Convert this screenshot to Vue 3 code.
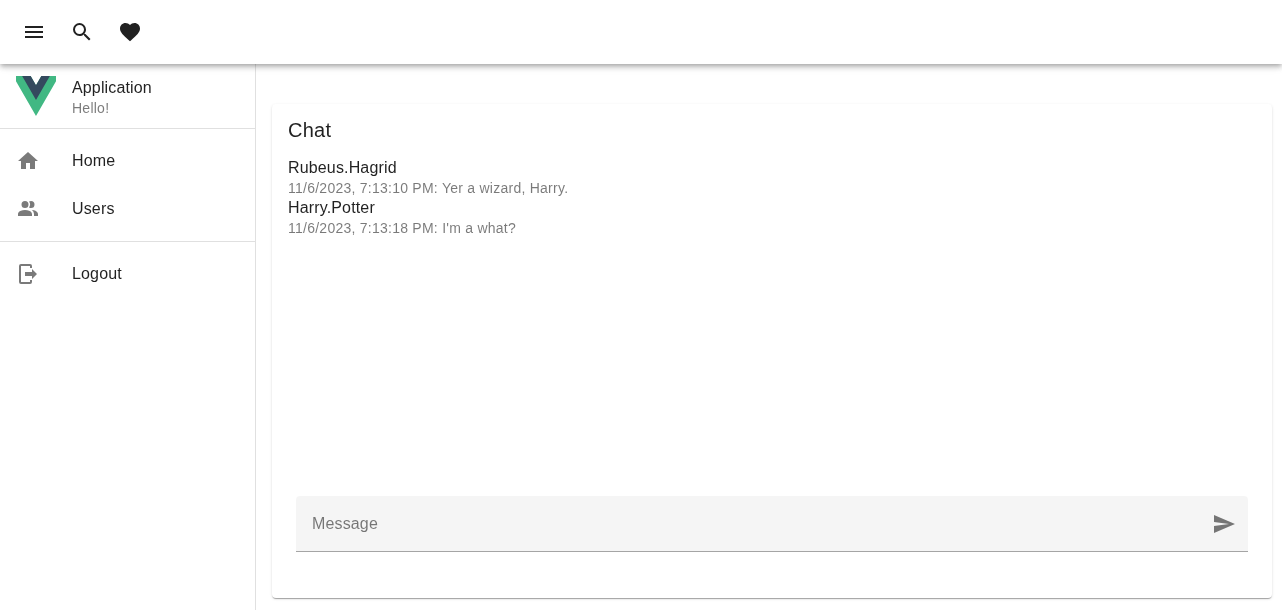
<script setup>
import { ref } from 'vue'

const mensagem = ref('')

const toolbar = [
  { id: 'menu', d: 'M3,6H21V8H3V6M3,11H21V13H3V11M3,16H21V18H3V16Z' },
  { id: 'search', d: 'M9.5,3A6.5,6.5 0 0,1 16,9.5C16,11.11 15.41,12.59 14.44,13.73L14.71,14H15.5L20.5,19L19,20.5L14,15.5V14.71L13.73,14.44C12.59,15.41 11.11,16 9.5,16A6.5,6.5 0 0,1 3,9.5A6.5,6.5 0 0,1 9.5,3M9.5,5C7,5 5,7 5,9.5C5,12 7,14 9.5,14C12,14 14,12 14,9.5C14,7 12,5 9.5,5Z' },
  { id: 'heart', d: 'M12,21.35L10.55,20.03C5.4,15.36 2,12.27 2,8.5C2,5.41 4.42,3 7.5,3C9.24,3 10.91,3.81 12,5.08C13.09,3.81 14.76,3 16.5,3C19.58,3 22,5.41 22,8.5C22,12.27 18.6,15.36 13.45,20.03L12,21.35Z' }
]

const links = [
  { title: 'Home', d: 'M10,20V14H14V20H19V12H22L12,3L2,12H5V20H10Z' },
  { title: 'Users', d: 'M16 17V19H2V17S2 13 9 13 16 17 16 17M12.5 7.5A3.5 3.5 0 1 0 9 11A3.5 3.5 0 0 0 12.5 7.5M15.94 13A5.32 5.32 0 0 1 18 17V19H22V17S22 13.37 15.94 13M15 4A3.39 3.39 0 0 0 13.07 4.59A5 5 0 0 1 13.07 10.41A3.39 3.39 0 0 0 15 11A3.5 3.5 0 0 0 15 4Z' }
]

const logoutIcon = 'M16 17V14H9V10H16V7L21 12L16 17M14 2A2 2 0 0 1 16 4V6H14V4H5V20H14V18H16V20A2 2 0 0 1 14 22H5A2 2 0 0 1 3 20V4A2 2 0 0 1 5 2H14Z'
const sendIcon = 'M2,21L23,12L2,3V10L17,12L2,14V21Z'

const mensagens = [
  { id: 1, user: 'Rubeus.Hagrid', text: '11/6/2023, 7:13:10 PM: Yer a wizard, Harry.' },
  { id: 2, user: 'Harry.Potter', text: "11/6/2023, 7:13:18 PM: I'm a what?" }
]
</script>

<template>
  <div class="app">
    <header class="topbar">
      <button v-for="item in toolbar" :key="item.id" class="icon-btn" type="button">
        <svg width="24" height="24" viewBox="0 0 24 24"><path :d="item.d" /></svg>
      </button>
    </header>

    <div class="body">
      <nav class="drawer">
        <div class="profile">
          <svg class="logo" width="40" height="40" viewBox="0 0 261.76 226.69" preserveAspectRatio="xMidYMid slice">
            <path d="M161.096.001l-30.225 52.351L100.647.001H-.005l130.877 226.688L261.749.001z" fill="#41b883" />
            <path d="M161.096.001l-30.225 52.351L100.647.001H52.346l78.526 136.01L209.398.001z" fill="#34495e" />
          </svg>
          <div class="profile-text">
            <div class="title">Application</div>
            <div class="subtitle">Hello!</div>
          </div>
        </div>
        <hr class="divider" />
        <div class="list">
          <a v-for="link in links" :key="link.title" class="link">
            <svg width="24" height="24" viewBox="0 0 24 24"><path :d="link.d" /></svg>
            <span class="title">{{ link.title }}</span>
          </a>
        </div>
        <hr class="divider" />
        <div class="list">
          <a class="link">
            <svg width="24" height="24" viewBox="0 0 24 24"><path :d="logoutIcon" /></svg>
            <span class="title">Logout</span>
          </a>
        </div>
      </nav>

      <main class="main">
        <section class="card">
          <h2 class="card-title">Chat</h2>
          <div class="messages">
            <div v-for="m in mensagens" :key="m.id">
              <div class="title">{{ m.user }}</div>
              <div class="subtitle">{{ m.text }}</div>
            </div>
          </div>
          <div class="composer">
            <div class="field">
              <input v-model="mensagem" type="text" placeholder="Message" />
              <svg width="24" height="24" viewBox="0 0 24 24"><path :d="sendIcon" /></svg>
            </div>
          </div>
        </section>
      </main>
    </div>
  </div>
</template>

<style>
html,
body {
  margin: 0;
  height: 100%;
  overflow: hidden;
  background: #fff;
}
</style>

<style scoped>
.app {
  height: 610px;
  display: flex;
  flex-direction: column;
  font-family: "Liberation Sans", Arial, sans-serif;
  color: rgba(0, 0, 0, 0.87);
  will-change: transform;
}

.topbar {
  height: 64px;
  flex: none;
  display: flex;
  align-items: center;
  padding-left: 10px;
  position: relative;
  z-index: 2;
  background: #fff;
  box-shadow: 0 2px 4px -1px rgba(0, 0, 0, 0.2), 0 4px 5px rgba(0, 0, 0, 0.14), 0 1px 10px rgba(0, 0, 0, 0.12);
}

.icon-btn {
  width: 48px;
  height: 48px;
  display: flex;
  align-items: center;
  justify-content: center;
  padding: 0;
  border: 0;
  background: none;
  cursor: pointer;
}

.icon-btn svg {
  fill: rgba(0, 0, 0, 0.87);
}

.body {
  flex: 1;
  min-height: 0;
  display: flex;
}

.drawer {
  width: 256px;
  flex: none;
  box-sizing: border-box;
  border-right: 1px solid rgba(0, 0, 0, 0.12);
}

.profile {
  height: 64px;
  box-sizing: border-box;
  display: flex;
  align-items: center;
  gap: 16px;
  padding: 0 16px;
}

.profile-text {
  padding-top: 4px;
}

.logo {
  flex: none;
}

.title {
  font-size: 16px;
  line-height: 20px;
  letter-spacing: 0.009375em;
}

.subtitle {
  font-size: 14px;
  line-height: 20px;
  letter-spacing: 0.0178571em;
  opacity: 0.6;
}

.divider {
  margin: 0;
  border: 0;
  border-top: 1px solid rgba(0, 0, 0, 0.12);
}

.list {
  padding: 8px 0;
}

.link {
  height: 48px;
  display: flex;
  align-items: center;
  gap: 32px;
  padding: 0 16px;
  cursor: pointer;
}

.link svg {
  flex: none;
  fill: rgba(0, 0, 0, 0.52);
}

.main {
  flex: 1;
  min-width: 0;
  display: flex;
  padding: 40px 10px 12px 16px;
}

.card {
  flex: 1;
  min-width: 0;
  display: flex;
  flex-direction: column;
  border-radius: 4px;
  background: #fff;
  box-shadow: 0 2px 1px -1px rgba(0, 0, 0, 0.2), 0 1px 1px rgba(0, 0, 0, 0.14), 0 1px 3px rgba(0, 0, 0, 0.12);
}

.card-title {
  margin: 0;
  padding: 10px 16px;
  font-size: 20px;
  font-weight: 400;
  line-height: 32px;
  letter-spacing: 0.0125em;
}

.messages {
  flex: 1;
  padding: 2px 16px 0;
}

.composer {
  padding: 0 24px 46px;
}

.field {
  height: 56px;
  box-sizing: border-box;
  display: flex;
  align-items: center;
  padding: 0 12px 0 16px;
  background: rgba(0, 0, 0, 0.04);
  border-bottom: 1px solid rgba(0, 0, 0, 0.33);
  border-radius: 4px 4px 0 0;
}

.field input {
  flex: 1;
  min-width: 0;
  padding: 0;
  border: 0;
  outline: 0;
  background: none;
  font: inherit;
  font-size: 16px;
  letter-spacing: 0.009375em;
  color: rgba(0, 0, 0, 0.87);
}

.field input::placeholder {
  color: rgba(0, 0, 0, 0.52);
  opacity: 1;
}

.field svg {
  flex: none;
  fill: rgba(0, 0, 0, 0.52);
}
</style>
